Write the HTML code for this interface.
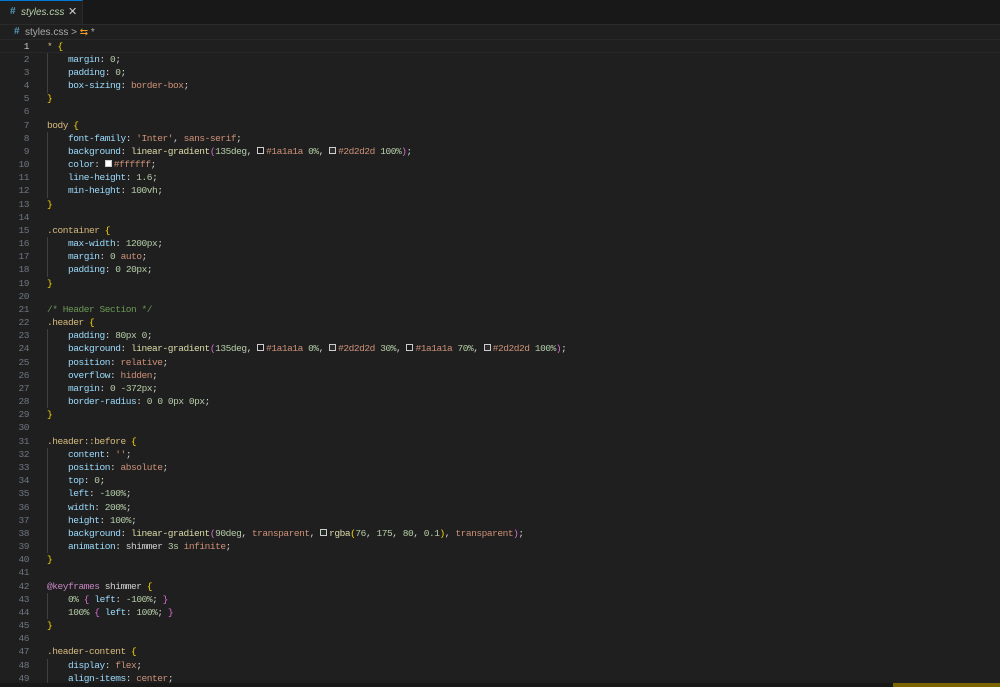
<!DOCTYPE html>
<html><head><meta charset="utf-8"><style>
html,body{margin:0;padding:0;width:1000px;height:687px;overflow:hidden;background:#1f1f1f;}
.tabbar{position:absolute;left:0;top:0;width:1000px;height:24px;background:#181818;border-bottom:1px solid #2b2b2b;}
.tab{position:absolute;left:0;top:0;width:83px;height:24px;background:#1f1f1f;border-top:1px solid #0078d4;box-sizing:border-box;border-right:1px solid #2b2b2b;font:italic 10px "Liberation Sans",sans-serif;color:#fff;}
.tab .h{position:absolute;left:10px;top:5px;color:#519aba;font-style:normal;font-weight:bold;}
.tab .n{position:absolute;left:21px;top:6px;}
.tab .x{position:absolute;left:68px;top:4px;font-style:normal;font-size:11px;color:#ccc;}
.bc{position:absolute;left:0;top:25px;height:14px;width:1000px;font:10px "Liberation Sans",sans-serif;color:#a9a9a9;}
.code{position:absolute;left:0;top:39.5px;font:9.5px/13.17px "Liberation Mono",monospace;letter-spacing:-0.45px;white-space:pre;color:#d4d4d4;}
.ln{position:absolute;left:0;top:0;width:29px;text-align:right;color:#6e7681;}
.tx{position:absolute;left:47px;top:0;}
.p{color:#9cdcfe}.v{color:#ce9178}.n{color:#b5cea8}.s{color:#d7ba7d}.b{color:#ffd700}.c{color:#6a9955}.k{color:#c586c0}.f{color:#dcdcaa}.q{color:#da70d6}.w{color:#d4d4d4}
.sw{display:inline-block;width:7px;height:7px;border:1px solid #ccc;box-sizing:border-box;margin-right:2px;vertical-align:0px;}
.guide{position:absolute;left:47px;width:1px;background:#404040;}
.bar{position:absolute;left:893px;top:683px;width:107px;height:4px;background:#7a6500;}
.bot{position:absolute;left:0;top:683px;width:893px;height:4px;background:#181818;}
</style></head><body>
<div class="tabbar"></div>
<div class="tab"><span class="h">#</span><span class="n">styles.css</span><span class="x">✕</span></div>
<div class="bc"><span style="position:absolute;left:14px;top:1px;color:#519aba;font-weight:bold">#</span><span style="position:absolute;left:25px;top:2px">styles.css &gt; <span style="color:#ee9d28">⇆</span> *</span></div>
<div style="position:absolute;left:0;top:39px;width:1000px;height:14px;border-top:1px solid #282828;border-bottom:1px solid #282828;box-sizing:border-box"></div>
<div class="guide" style="top:53px;height:40px"></div>
<div class="guide" style="top:132px;height:66px"></div>
<div class="guide" style="top:237px;height:40px"></div>
<div class="guide" style="top:329px;height:79px"></div>
<div class="guide" style="top:448px;height:105px"></div>
<div class="guide" style="top:593px;height:26px"></div>
<div class="guide" style="top:659px;height:28px"></div>
<div class="code"><div class="ln"><span style="color:#ccc">1</span>
2
3
4
5
6
7
8
9
10
11
12
13
14
15
16
17
18
19
20
21
22
23
24
25
26
27
28
29
30
31
32
33
34
35
36
37
38
39
40
41
42
43
44
45
46
47
48
49</div><div class="tx"><span class="s">*</span> <span class="b">{</span>
    <span class="p">margin</span>: <span class="n">0</span>;
    <span class="p">padding</span>: <span class="n">0</span>;
    <span class="p">box-sizing</span>: <span class="v">border-box</span>;
<span class="b">}</span>

<span class="s">body</span> <span class="b">{</span>
    <span class="p">font-family</span>: <span class="v">'Inter'</span>, <span class="v">sans-serif</span>;
    <span class="p">background</span>: <span class="f">linear-gradient</span><span class="q">(</span><span class="n">135deg</span>, <span class="sw" style="background:#1a1a1a"></span><span class="v">#1a1a1a</span> <span class="n">0%</span>, <span class="sw" style="background:#2d2d2d"></span><span class="v">#2d2d2d</span> <span class="n">100%</span><span class="q">)</span>;
    <span class="p">color</span>: <span class="sw" style="background:#fff"></span><span class="v">#ffffff</span>;
    <span class="p">line-height</span>: <span class="n">1.6</span>;
    <span class="p">min-height</span>: <span class="n">100vh</span>;
<span class="b">}</span>

<span class="s">.container</span> <span class="b">{</span>
    <span class="p">max-width</span>: <span class="n">1200px</span>;
    <span class="p">margin</span>: <span class="n">0</span> <span class="v">auto</span>;
    <span class="p">padding</span>: <span class="n">0</span> <span class="n">20px</span>;
<span class="b">}</span>

<span class="c">/* Header Section */</span>
<span class="s">.header</span> <span class="b">{</span>
    <span class="p">padding</span>: <span class="n">80px</span> <span class="n">0</span>;
    <span class="p">background</span>: <span class="f">linear-gradient</span><span class="q">(</span><span class="n">135deg</span>, <span class="sw" style="background:#1a1a1a"></span><span class="v">#1a1a1a</span> <span class="n">0%</span>, <span class="sw" style="background:#2d2d2d"></span><span class="v">#2d2d2d</span> <span class="n">30%</span>, <span class="sw" style="background:#1a1a1a"></span><span class="v">#1a1a1a</span> <span class="n">70%</span>, <span class="sw" style="background:#2d2d2d"></span><span class="v">#2d2d2d</span> <span class="n">100%</span><span class="q">)</span>;
    <span class="p">position</span>: <span class="v">relative</span>;
    <span class="p">overflow</span>: <span class="v">hidden</span>;
    <span class="p">margin</span>: <span class="n">0</span> <span class="n">-372px</span>;
    <span class="p">border-radius</span>: <span class="n">0</span> <span class="n">0</span> <span class="n">0px</span> <span class="n">0px</span>;
<span class="b">}</span>

<span class="s">.header::before</span> <span class="b">{</span>
    <span class="p">content</span>: <span class="v">''</span>;
    <span class="p">position</span>: <span class="v">absolute</span>;
    <span class="p">top</span>: <span class="n">0</span>;
    <span class="p">left</span>: <span class="n">-100%</span>;
    <span class="p">width</span>: <span class="n">200%</span>;
    <span class="p">height</span>: <span class="n">100%</span>;
    <span class="p">background</span>: <span class="f">linear-gradient</span><span class="q">(</span><span class="n">90deg</span>, <span class="v">transparent</span>, <span class="sw" style="background:rgba(76,175,80,0.1)"></span><span class="f">rgba</span><span class="b">(</span><span class="n">76</span>, <span class="n">175</span>, <span class="n">80</span>, <span class="n">0.1</span><span class="b">)</span>, <span class="v">transparent</span><span class="q">)</span>;
    <span class="p">animation</span>: <span class="w">shimmer</span> <span class="n">3s</span> <span class="v">infinite</span>;
<span class="b">}</span>

<span class="k">@keyframes</span> <span class="w">shimmer</span> <span class="b">{</span>
    <span class="n">0%</span> <span class="q">{</span> <span class="p">left</span>: <span class="n">-100%</span>; <span class="q">}</span>
    <span class="n">100%</span> <span class="q">{</span> <span class="p">left</span>: <span class="n">100%</span>; <span class="q">}</span>
<span class="b">}</span>

<span class="s">.header-content</span> <span class="b">{</span>
    <span class="p">display</span>: <span class="v">flex</span>;
    <span class="p">align-items</span>: <span class="v">center</span>;</div></div>
<div class="bot"></div><div class="bar"></div>
</body></html>
